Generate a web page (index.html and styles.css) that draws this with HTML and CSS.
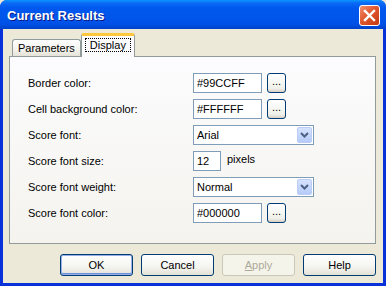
FILE: index.html
```html
<!DOCTYPE html>
<html lang="en">
  <head>
    <meta charset="UTF-8" />
    <title>Current Results</title>
    <link rel="stylesheet" href="styles.css">
  </head>
  <body>
    <div class="window">
      <div class="titlebar">
        <span class="title">Current Results</span>
        <button class="close-btn">
          <svg width="13" height="13" viewBox="0 0 13 13">
            <path d="M2 2 L11 11 M11 2 L2 11" stroke="#fff" stroke-width="2.4" stroke-linecap="square" />
          </svg>
        </button>
      </div>
      <div class="client">
        <div class="tabs">
          <div class="tab">Parameters</div>
          <div class="tab active"><span class="focus">Display</span></div>
        </div>
        <div class="panel">
          <div class="form-row">
            <label>Border color:</label>
            <div class="control">
              <input class="color-input" type="text" value="#99CCFF" />
              <button class="dots">...</button>
            </div>
          </div>
          <div class="form-row">
            <label>Cell background color:</label>
            <div class="control">
              <input class="color-input" type="text" value="#FFFFFF" />
              <button class="dots">...</button>
            </div>
          </div>
          <div class="form-row">
            <label>Score font:</label>
            <div class="control">
              <div class="select">
                <span>Arial</span>
                <span class="arrow">
                  <svg width="9" height="6" viewBox="0 0 9 6">
                    <path d="M1 1 L4.5 4.5 L8 1" fill="none" stroke="#4d6185" stroke-width="2" />
                  </svg>
                </span>
              </div>
            </div>
          </div>
          <div class="form-row">
            <label>Score font size:</label>
            <div class="control">
              <input class="size-input" type="text" value="12" />
              <span class="unit">pixels</span>
            </div>
          </div>
          <div class="form-row">
            <label>Score font weight:</label>
            <div class="control">
              <div class="select">
                <span>Normal</span>
                <span class="arrow">
                  <svg width="9" height="6" viewBox="0 0 9 6">
                    <path d="M1 1 L4.5 4.5 L8 1" fill="none" stroke="#4d6185" stroke-width="2" />
                  </svg>
                </span>
              </div>
            </div>
          </div>
          <div class="form-row">
            <label>Score font color:</label>
            <div class="control">
              <input class="color-input" type="text" value="#000000" />
              <button class="dots">...</button>
            </div>
          </div>
        </div>
        <div class="buttons">
          <button class="btn default">OK</button>
          <button class="btn">Cancel</button>
          <button class="btn" disabled><u>A</u>pply</button>
          <button class="btn">Help</button>
        </div>
      </div>
    </div>
  </body>
</html>
```

FILE: styles.css
```css
body {
  margin: 0;
  padding: 0;
  font-family: "Liberation Sans", Arial, sans-serif;
  font-size: 11px;
  background-color: #ece9d8;
}
.window {
  width: 386px;
  height: 286px;
  display: flex;
  flex-direction: column;
  background-color: #0831d9;
  border-radius: 7px 7px 0 0;
  overflow: hidden;
}
.titlebar {
  height: 29px;
  flex-shrink: 0;
  display: flex;
  align-items: center;
  justify-content: space-between;
  padding: 0 6px 0 7px;
  background: linear-gradient(#0a97ff 0px, #0a6bf5 3px, #0058ee 8px, #0055ea 18px, #0050e6 24px, #0042c8 29px);
}
.title {
  color: white;
  font-weight: bold;
  font-size: 13px;
  margin-top: 2px;
  text-shadow: 1px 1px 0 #0a1883;
}
.close-btn {
  width: 21px;
  height: 21px;
  margin-top: 1px;
  padding: 0;
  display: flex;
  align-items: center;
  justify-content: center;
  border: 1px solid white;
  border-radius: 3px;
  background: linear-gradient(135deg, #f09070, #e0582e 45%, #c4370f);
}
.client {
  flex: 1;
  margin: 0 3px 3px 3px;
  background-color: #ece9d8;
  padding: 6px 7px 0 6px;
  display: flex;
  flex-direction: column;
}
.tabs {
  display: flex;
  align-items: flex-end;
  padding-left: 3px;
  height: 21px;
  flex-shrink: 0;
  position: relative;
  z-index: 1;
}
.tab {
  height: 16px;
  padding: 0 5px;
  line-height: 16px;
  border: 1px solid #919b9c;
  border-bottom: none;
  border-radius: 3px 3px 0 0;
  background: linear-gradient(#ffffff, #f3f2ec 60%, #e5e3d8);
  color: #000;
}
.tab.active {
  height: 21px;
  line-height: 19px;
  padding: 0 3px;
  margin-bottom: -1px;
  border-top: 3px solid #ffc83c;
  border-radius: 3px 3px 0 0;
  background: #fcfcfe;
}
.tab.active .focus {
  padding: 0 4px;
  border: 1px dotted #000;
}
.panel {
  height: 188px;
  flex-shrink: 0;
  box-sizing: border-box;
  border: 1px solid #919b9c;
  background: linear-gradient(#fcfcfe, #f4f3ee);
  padding: 16px 0 0 18px;
  display: flex;
  flex-direction: column;
  gap: 6px;
}
.form-row {
  display: flex;
  align-items: center;
  height: 20px;
}
.form-row label {
  width: 165px;
  color: #000;
}
.control {
  display: flex;
  align-items: center;
}
input {
  font-family: "Liberation Sans", Arial, sans-serif;
  font-size: 11px;
  color: #000;
  height: 20px;
  box-sizing: border-box;
  border: 1px solid #7f9db9;
  padding: 0 3px;
  margin: 0;
  background: white;
}
.color-input {
  width: 69px;
}
.size-input {
  width: 28px;
}
.unit {
  margin-left: 6px;
  margin-bottom: 4px;
}
.dots {
  width: 19px;
  height: 20px;
  margin-left: 5px;
  padding: 0 0 5px 0;
  font-size: 11px;
  font-family: "Liberation Sans", Arial, sans-serif;
  border: 1px solid #003c74;
  border-radius: 3px;
  background: linear-gradient(#ffffff, #f0f0ea 80%, #d6d0c5);
  color: #000;
}
.select {
  width: 121px;
  height: 20px;
  box-sizing: border-box;
  border: 1px solid #7f9db9;
  background: white;
  display: flex;
  align-items: center;
  justify-content: space-between;
  padding: 1px 1px 1px 3px;
}
.arrow {
  width: 15px;
  height: 16px;
  display: flex;
  align-items: center;
  justify-content: center;
  border: 1px solid #b9cdf7;
  border-radius: 2px;
  box-sizing: border-box;
  background: linear-gradient(#d6e3fe, #b6cbf8);
}
.buttons {
  display: flex;
  gap: 8px;
  padding: 10px 0 0 51px;
}
.btn {
  width: 73px;
  height: 22px;
  padding: 0;
  font-family: "Liberation Sans", Arial, sans-serif;
  font-size: 11px;
  color: #000;
  border: 1px solid #003c74;
  border-radius: 3px;
  background: linear-gradient(#ffffff, #f4f4f0 60%, #e3e1d6);
}
.btn u {
  text-decoration: underline;
}
.btn.default {
  box-shadow: inset 0 0 0 1px #97b1e8, inset 0 -1px 0 1px #6e8fd9;
}
.btn:disabled {
  color: #aca899;
  border-color: #c9c7ba;
  background: #f5f4ea;
}
```
